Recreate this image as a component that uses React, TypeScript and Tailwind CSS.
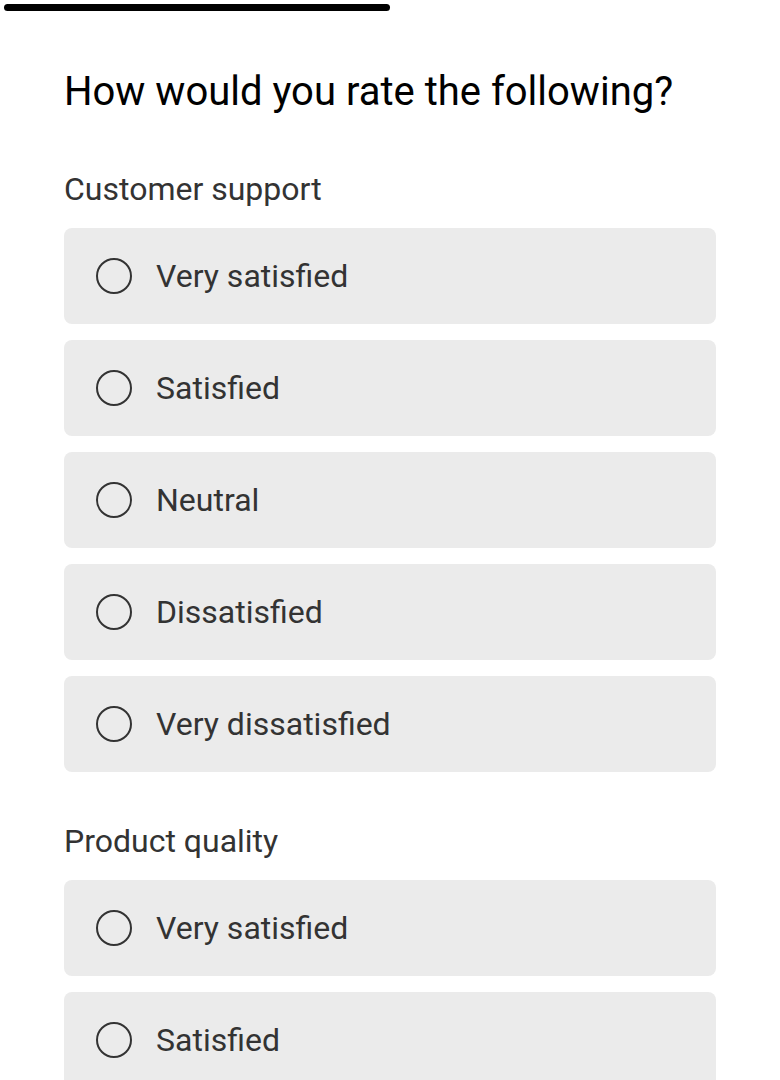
import React from 'react';

const options = ['Very satisfied', 'Satisfied', 'Neutral', 'Dissatisfied', 'Very dissatisfied'];

const questions = [
  { label: 'Customer support', options },
  { label: 'Product quality', options },
];

function RadioRow({ text }: { text: string }) {
  return (
    <label className="flex h-[96px] shrink-0 items-center rounded-[8px] bg-[#ebebeb] pl-[32px]">
      <span className="h-[36px] w-[36px] shrink-0 rounded-full border-2 border-[#333333]" />
      <span className="ml-[24px] text-[32px] leading-[40px] text-[#333333]">{text}</span>
    </label>
  );
}

export default function App() {
  return (
    <div className="h-[1080px] overflow-hidden bg-white" style={{ fontFamily: 'Roboto, "Noto Sans", sans-serif' }}>
      <div className="ml-[4px] mt-[4px] h-[7px] w-[386px] rounded-full bg-black" />
      <div className="px-[64px] pt-[57px]">
        <h1 className="mb-[53px] text-[40px] leading-[48px] text-black">How would you rate the following?</h1>
        <div className="flex flex-col gap-[49px]">
          {questions.map((q) => (
            <div key={q.label}>
              <div className="text-[32px] leading-[40px] text-[#333333]">{q.label}</div>
              <div className="mt-[19px] flex flex-col gap-[16px]">
                {q.options.map((o) => (
                  <RadioRow key={o} text={o} />
                ))}
              </div>
            </div>
          ))}
        </div>
      </div>
    </div>
  );
}
